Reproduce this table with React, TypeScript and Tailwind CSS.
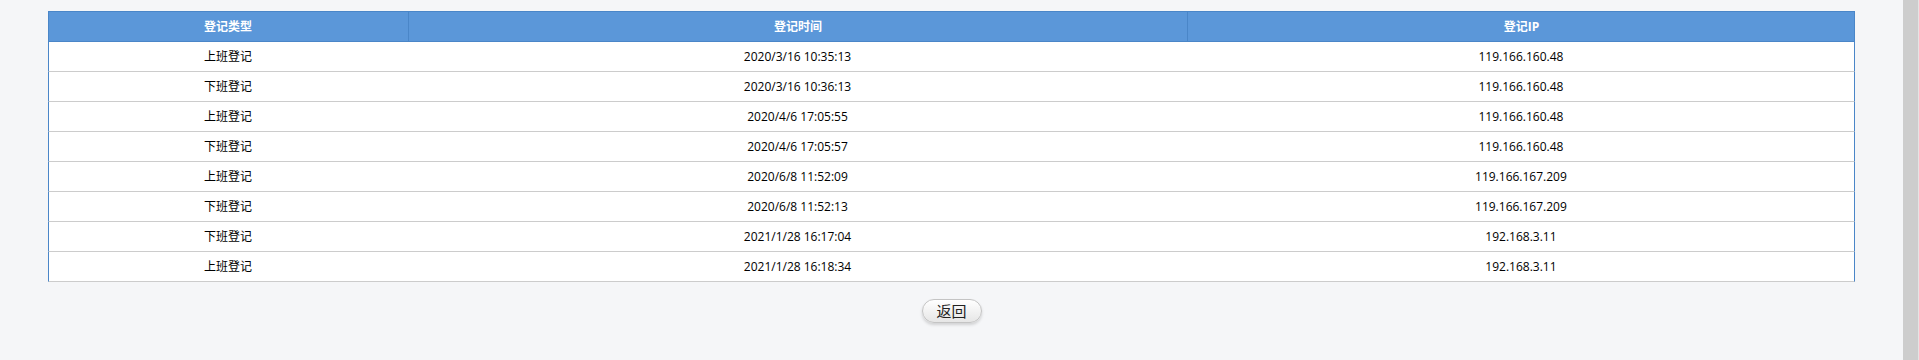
import React from 'react';

interface SignRecord {
  type: string;
  time: string;
  ip: string;
}

const records: SignRecord[] = [
  { type: '上班登记', time: '2020/3/16 10:35:13', ip: '119.166.160.48' },
  { type: '下班登记', time: '2020/3/16 10:36:13', ip: '119.166.160.48' },
  { type: '上班登记', time: '2020/4/6 17:05:55', ip: '119.166.160.48' },
  { type: '下班登记', time: '2020/4/6 17:05:57', ip: '119.166.160.48' },
  { type: '上班登记', time: '2020/6/8 11:52:09', ip: '119.166.167.209' },
  { type: '下班登记', time: '2020/6/8 11:52:13', ip: '119.166.167.209' },
  { type: '下班登记', time: '2021/1/28 16:17:04', ip: '192.168.3.11' },
  { type: '上班登记', time: '2021/1/28 16:18:34', ip: '192.168.3.11' },
];

const cols = 'grid grid-cols-[359fr_780fr_667fr]';

export default function App() {
  return (
    <div
      className="flex h-[360px] w-full overflow-hidden bg-[#f5f6f8] text-[12px] text-black"
      style={{ fontFamily: '"Open Sans", "Noto Sans CJK SC", sans-serif' }}
    >
      <div className="flex-1 pt-[11px]">
        <div className="mx-auto w-[95%] border-t border-[#4a86c8]">
          {/* 表头 */}
          <div className={`${cols} h-[30px] border-x border-b border-[#4a86c8] bg-[#5b97d9] font-bold text-white`}>
            <div className="flex items-center justify-center">登记类型</div>
            <div className="flex items-center justify-center border-l border-[#4a86c8]">登记时间</div>
            <div className="flex items-center justify-center border-l border-[#4a86c8]">登记IP</div>
          </div>
          {records.map((r, i) => (
            <div
              key={i}
              className={`${cols} h-[30px] border-x border-x-[#4a86c8] border-b border-b-[#cccccc] bg-white`}
            >
              <div className="flex items-center justify-center">{r.type}</div>
              <div className="flex items-center justify-center">{r.time}</div>
              <div className="flex items-center justify-center">{r.ip}</div>
            </div>
          ))}
        </div>

        <div className="mt-[17px] flex justify-center">
          <button className="flex h-[24px] w-[60px] items-center justify-center rounded-full border border-[#c4c4c4] bg-gradient-to-b from-white to-[#e6e6e6] text-[15px] leading-none text-[#222] shadow-[0_2px_3px_rgba(0,0,0,0.15)]">
            返回
          </button>
        </div>
      </div>

      {/* 滚动条 */}
      <div className="flex w-[16px] shrink-0">
        <div className="w-[15px] bg-[#cdcdcd]" />
        <div className="w-[1px] bg-[#e4e4e4]" />
      </div>
    </div>
  );
}
